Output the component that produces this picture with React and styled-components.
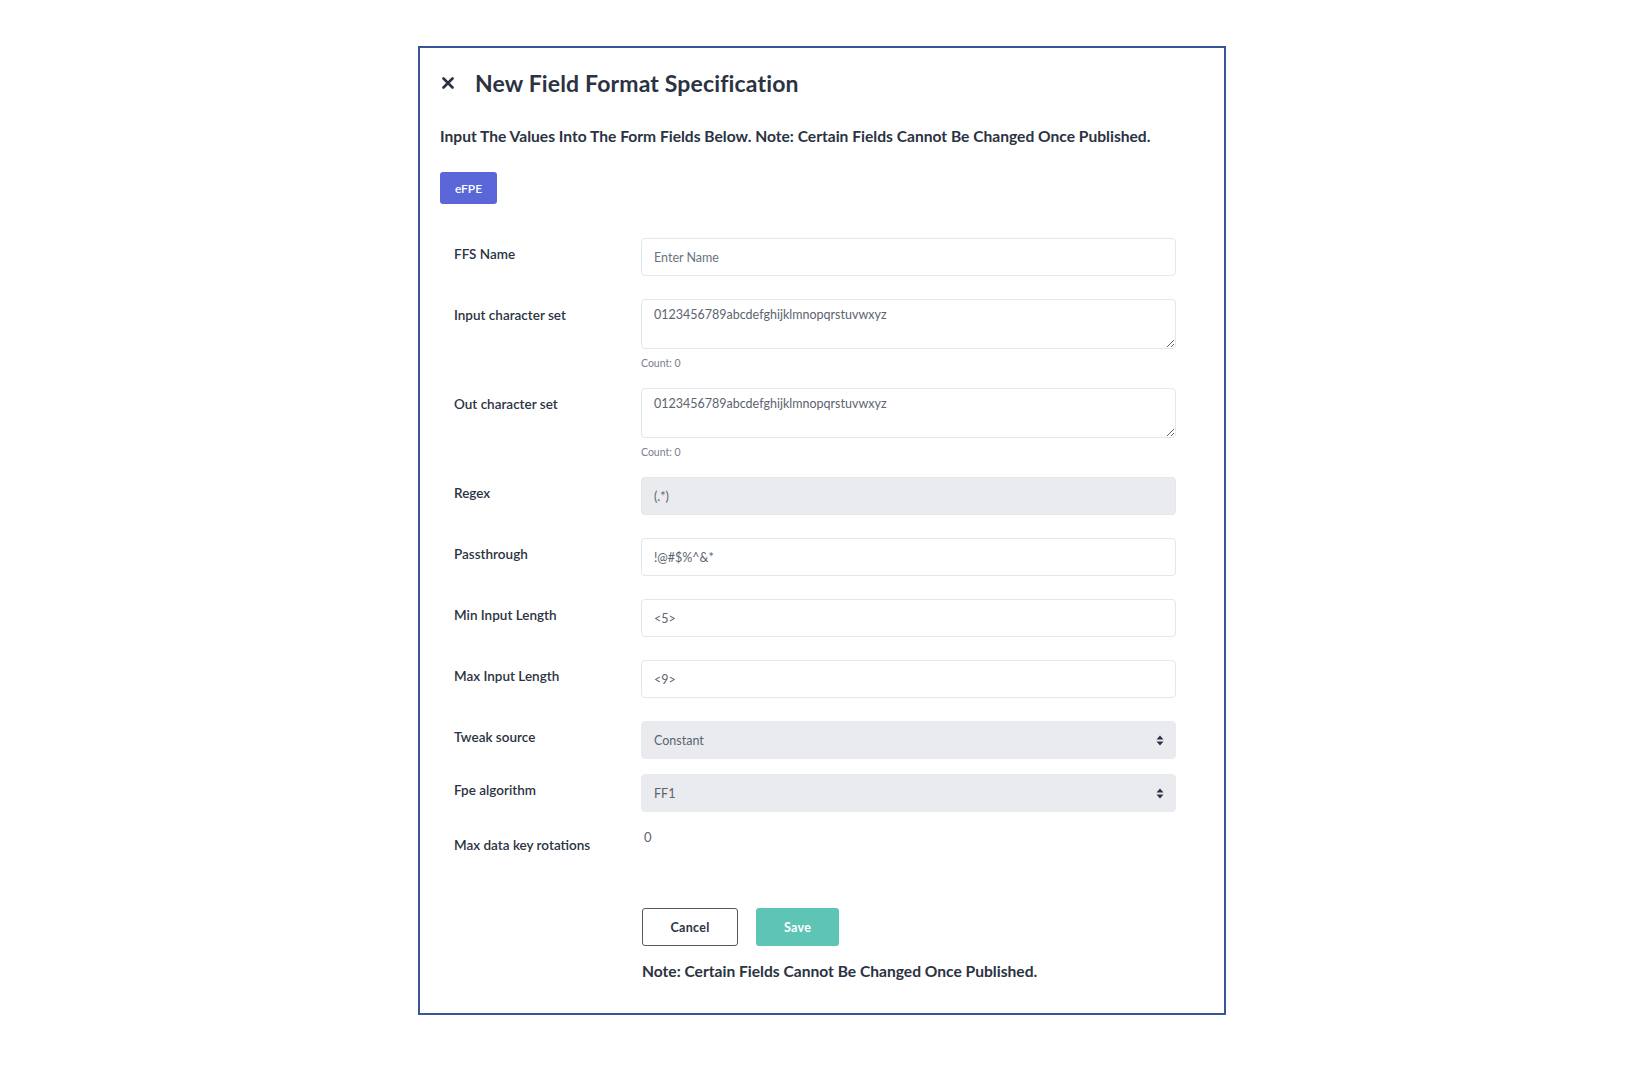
import React from 'react'
import styled, { createGlobalStyle } from 'styled-components'

const GlobalStyle = createGlobalStyle`
  html, body {
    margin: 0;
    padding: 0;
    background: #ffffff;
    font-family: Lato, "Open Sans", sans-serif;
    color: #2b3343;
  }
`

const Page = styled.div`
  padding: 46px 0 60px 418px;
`

const Modal = styled.div`
  width: 804px;
  height: 965px;
  border: 2px solid #3a5597;
  box-sizing: content-box;
`

const Inner = styled.div`
  padding: 20px 0 0 20px;
`

const TitleRow = styled.div`
  display: flex;
  align-items: center;
  height: 30px;
`

const CloseBtn = styled.button`
  width: 14px;
  height: 14px;
  margin-left: 1px;
  margin-right: 20px;
  padding: 0;
  border: 0;
  background: none;
  display: flex;
  align-items: center;
  justify-content: center;
  cursor: pointer;
`

const Title = styled.h1`
  margin: 0;
  font-size: 23px;
  font-weight: 700;
  letter-spacing: 0.15px;
  color: #2b3343;
`

const Subtitle = styled.p`
  margin: 28px 0 0;
  font-size: 15.6px;
  font-weight: 700;
  line-height: 20px;
  color: #2b3343;
`

const Tag = styled.button`
  margin-top: 26px;
  width: 57px;
  height: 32px;
  border: 0;
  border-radius: 3px;
  background: #5b67d8;
  color: #ffffff;
  font-family: Lato, sans-serif;
  font-size: 12px;
  font-weight: 600;
`

const Form = styled.div`
  margin-top: 34px;
  padding-left: 14px;
  display: flex;
  flex-direction: column;
`

const Row = styled.div`
  display: grid;
  grid-template-columns: 187px 535px;
  margin-bottom: ${({ gap }) => gap}px;
`

const Label = styled.label`
  font-size: 13.5px;
  font-weight: 600;
  color: #2b3343;
  padding-top: ${({ top }) => top || 8}px;
`

const Field = styled.div`
  display: flex;
  flex-direction: column;
  position: relative;
`

const baseField = `
  box-sizing: border-box;
  width: 100%;
  border: 1px solid #e3e6ea;
  border-radius: 4px;
  font-family: Lato, sans-serif;
  font-size: 12.5px;
  color: #5c6470;
  padding: 0 12px;
  outline: none;
`

const Input = styled.input`
  ${baseField}
  height: 38px;
  background: ${({ disabled }) => (disabled ? '#e9ebee' : '#ffffff')};
  &::placeholder { color: #6b7380; }
`

const TextArea = styled.textarea`
  ${baseField}
  height: 50px;
  padding-top: 7px;
  resize: vertical;
  background: #ffffff;
`

const Count = styled.span`
  margin-top: 8px;
  font-size: 10.5px;
  color: #7a818c;
`

const Select = styled.select`
  ${baseField}
  height: 38px;
  appearance: none;
  background: #e9ebee;
  border-color: #e9ebee;
`

const Caret = styled.svg`
  position: absolute;
  right: 12px;
  top: 14px;
  pointer-events: none;
`

const Plain = styled.span`
  font-size: 13px;
  color: #5c6470;
  padding: 2px 0 0 3px;
`

const Actions = styled.div`
  margin-top: 55px;
  margin-left: 202px;
  display: flex;
  gap: 18px;
`

const Button = styled.button`
  height: 38px;
  width: ${({ w }) => w}px;
  border-radius: 3px;
  font-family: Lato, sans-serif;
  font-size: 12.5px;
  font-weight: 700;
  letter-spacing: 0.3px;
  border: ${({ primary }) => (primary ? '0' : '1px solid #555a60')};
  background: ${({ primary }) => (primary ? '#5ec5b6' : '#ffffff')};
  color: ${({ primary }) => (primary ? '#ffffff' : '#2b3343')};
`

const Note = styled.p`
  margin: 16px 0 0 202px;
  font-size: 15.6px;
  font-weight: 700;
  color: #2b3343;
`

const SelectField = ({ value }) => (
  <Field>
    <Select defaultValue={value}>
      <option>{value}</option>
    </Select>
    <Caret width="8" height="11" viewBox="0 0 8 11">
      <path d="M4 0.5 L7.5 4.5 H0.5 Z" fill="#2b3343" />
      <path d="M4 10.5 L7.5 6.5 H0.5 Z" fill="#2b3343" />
    </Caret>
  </Field>
)

export default function App() {
  const chars = '0123456789abcdefghijklmnopqrstuvwxyz'
  return (
    <>
      <GlobalStyle />
      <Page>
        <Modal>
          <Inner>
            <TitleRow>
              <CloseBtn aria-label="close">
                <svg width="12" height="12" viewBox="0 0 12 12">
                  <path d="M1.5 1.5 L10.5 10.5 M10.5 1.5 L1.5 10.5" stroke="#2b3343" strokeWidth="2.6" strokeLinecap="round" />
                </svg>
              </CloseBtn>
              <Title>New Field Format Specification</Title>
            </TitleRow>
            <Subtitle>Input The Values Into The Form Fields Below. Note: Certain Fields Cannot Be Changed Once Published.</Subtitle>
            <Tag>eFPE</Tag>
            <Form>
              <Row gap={23}>
                <Label>FFS Name</Label>
                <Field><Input placeholder="Enter Name" /></Field>
              </Row>
              <Row gap={19}>
                <Label>Input character set</Label>
                <Field>
                  <TextArea defaultValue={chars} />
                  <Count>Count: 0</Count>
                </Field>
              </Row>
              <Row gap={19}>
                <Label>Out character set</Label>
                <Field>
                  <TextArea defaultValue={chars} />
                  <Count>Count: 0</Count>
                </Field>
              </Row>
              <Row gap={23}>
                <Label>Regex</Label>
                <Field><Input disabled defaultValue="(.*)" /></Field>
              </Row>
              <Row gap={23}>
                <Label>Passthrough</Label>
                <Field><Input defaultValue="!@#$%^&*" /></Field>
              </Row>
              <Row gap={23}>
                <Label>Min Input Length</Label>
                <Field><Input defaultValue="<5>" /></Field>
              </Row>
              <Row gap={23}>
                <Label>Max Input Length</Label>
                <Field><Input defaultValue="<9>" /></Field>
              </Row>
              <Row gap={15}>
                <Label>Tweak source</Label>
                <SelectField value="Constant" />
              </Row>
              <Row gap={15}>
                <Label>Fpe algorithm</Label>
                <SelectField value="FF1" />
              </Row>
              <Row gap={0}>
                <Label top={10}>Max data key rotations</Label>
                <Plain>0</Plain>
              </Row>
            </Form>
            <Actions>
              <Button w={96}>Cancel</Button>
              <Button w={83} primary>Save</Button>
            </Actions>
            <Note>Note: Certain Fields Cannot Be Changed Once Published.</Note>
          </Inner>
        </Modal>
      </Page>
    </>
  )
}
